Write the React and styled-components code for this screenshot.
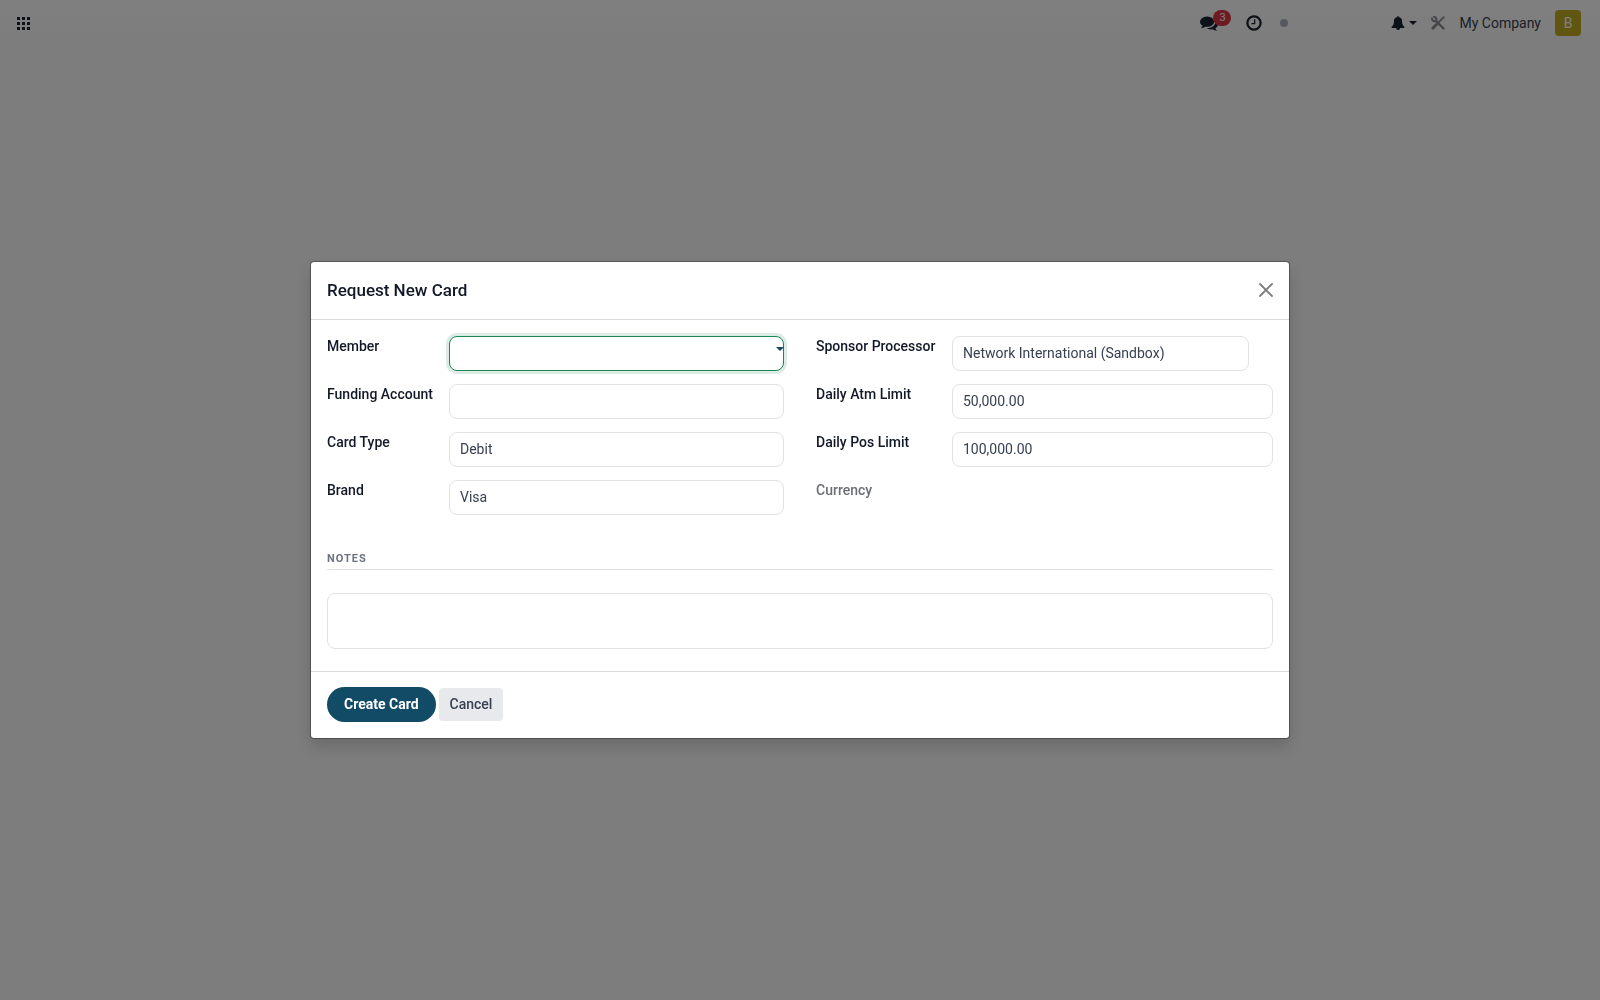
import React from "react";
import styled, { createGlobalStyle } from "styled-components";

const Global = createGlobalStyle`
  *, *::before, *::after { box-sizing: border-box; }
  html, body, #root { height: 100%; }
  body {
    margin: 0;
    background: #fafafa;
    color: #111827;
    font: 400 14px/21px Roboto, "Liberation Sans", sans-serif;
  }
  button, input, select, textarea { font: inherit; color: inherit; }
`;

const Page = styled.div`
  min-height: 100%;
`;

const Navbar = styled.header`
  display: flex;
  align-items: center;
  justify-content: space-between;
  height: 46px;
  padding: 0 19px 0 17px;
  background: linear-gradient(#ffffff, #fafafa);
`;

const IconButton = styled.button`
  position: relative;
  display: flex;
  align-items: center;
  gap: 4px;
  padding: 0;
  border: 0;
  background: none;
  color: ${(p) => p.$color || "#1b2330"};
`;

const Systray = styled.div`
  display: flex;
  align-items: center;
`;

const Group = styled.div`
  display: flex;
  align-items: center;
  gap: ${(p) => p.$gap}px;
  margin-right: ${(p) => p.$after || 0}px;
`;

const Badge = styled.span`
  position: absolute;
  top: -4px;
  left: 13px;
  width: 18px;
  border-radius: 8px;
  background: #dc3545;
  color: #ffffff;
  font-size: 11px;
  line-height: 16px;
  text-align: center;
`;

const Status = styled.span`
  width: 8px;
  height: 8px;
  border-radius: 50%;
  background: #adb5bd;
`;

const Caret = styled.span`
  border: 4px solid transparent;
  border-top-color: currentColor;
  border-bottom: 0;
`;

const Company = styled.button`
  padding: 0;
  border: 0;
  background: none;
  color: #374151;
`;

const Avatar = styled.button`
  width: 26px;
  height: 26px;
  padding: 0;
  border: 0;
  border-radius: 4px;
  background: #c0ad20;
  color: #ffffff;
`;

const Backdrop = styled.div`
  position: fixed;
  inset: 0;
  display: flex;
  align-items: center;
  justify-content: center;
  background: rgba(0, 0, 0, 0.5);
`;

const Dialog = styled.form`
  width: 100%;
  max-width: 980px;
  border: 1px solid rgba(0, 0, 0, 0.3);
  border-radius: 4px;
  background: #ffffff;
  background-clip: padding-box;
  box-shadow: 0 8px 16px rgba(0, 0, 0, 0.15);
`;

const Header = styled.div`
  display: flex;
  align-items: center;
  justify-content: space-between;
  padding: 16px 16px 17px;
  border-bottom: 1px solid #d8dadd;
`;

const Title = styled.h1`
  margin: 0;
  font-size: 17px;
  line-height: 24px;
  font-weight: 500;
`;

const Body = styled.div`
  padding: 16px 16px 22px;
`;

const Columns = styled.div`
  display: grid;
  grid-template-columns: 1fr 1fr;
  gap: 32px;
`;

const Fields = styled.div`
  display: grid;
  grid-template-columns: ${(p) => p.$label}px 1fr;
  grid-auto-rows: 35px;
  row-gap: 13px;
  column-gap: 16px;
`;

const Label = styled.label`
  font-weight: 500;
  white-space: nowrap;
  color: ${(p) => (p.$muted ? "#6b6e75" : "#111827")};
`;

const Control = styled.div`
  position: relative;
  display: flex;
  padding-right: ${(p) => p.$end || 0}px;
`;

const boxed = `
  width: 100%;
  border: 1px solid #e0e2e6;
  border-radius: 8px;
  background: #ffffff;
  color: #374151;
  outline: 0;
`;

const Input = styled.input`
  ${boxed}
  height: 35px;
  padding: 0 10px 2px;
  ${(p) =>
    p.$active &&
    "border-color: #198754; box-shadow: 0 0 0 3px rgba(25, 135, 84, 0.15);"}
`;

const Select = styled.select`
  ${boxed}
  height: 35px;
  padding: 0 10px;
  appearance: none;
`;

const FieldCaret = styled(Caret)`
  position: absolute;
  top: 11px;
  right: 0;
  color: #114b66;
`;

const Section = styled.h2`
  margin: 34px 0 23px;
  border-bottom: 1px solid #dee2e6;
  color: #6b7280;
  font-size: 11px;
  line-height: 20px;
  font-weight: 700;
  letter-spacing: 1px;
`;

const Notes = styled.textarea`
  ${boxed}
  display: block;
  height: 56px;
  padding: 6px 10px;
  resize: none;
`;

const Footer = styled.div`
  display: flex;
  align-items: center;
  gap: 3px;
  padding: 15px 16px 16px;
  border-top: 1px solid #d8dadd;
`;

const Button = styled.button`
  height: ${(p) => (p.$primary ? 35 : 33)}px;
  padding: 0 ${(p) => (p.$primary ? 17 : 11)}px;
  border: 0;
  border-radius: ${(p) => (p.$primary ? 18 : 4)}px;
  background: ${(p) => (p.$primary ? "#114b66" : "#e7e9ed")};
  color: ${(p) => (p.$primary ? "#ffffff" : "#374151")};
  font-weight: ${(p) => (p.$primary ? 700 : 500)};
`;

const AppsIcon = () => (
  <svg width="13" height="13" viewBox="0 0 13 13" fill="currentColor">
    {[0, 5, 10].map((y) =>
      [0, 5, 10].map((x) => (
        <rect key={`${x}-${y}`} x={x} y={y} width="3" height="3" />
      ))
    )}
  </svg>
);

const CommentsIcon = () => (
  <svg width="18" height="18" viewBox="0 0 1792 1792" fill="currentColor">
    <path d="M1408 768q0 139-94 257t-256.500 186.500-353.500 68.500q-86 0-176-16-124 88-278 128-36 9-86 16h-3q-11 0-20.500-8t-11.500-21q-1-3-1-6.500t.5-6.500 2-6l2.500-5 3.500-5.500 4-5 4.500-5 4-4.500q5-6 23-25t26-29.500 22.500-29 25-38.500 20.500-44q-124-72-195-177t-71-224q0-139 94-257t256.500-186.500 353.500-68.500 353.500 68.500 256.500 186.500 94 257zm384 256q0 120-71 224.500t-195 176.500q10 24 20.500 44t25 38.500 22.500 29 26 29.500 23 25q1 1 4 4.500t4.500 5 4 5 3.500 5.500l2.500 5 2 6 .5 6.500-1 6.500q-3 14-13 22t-22 7q-50-7-86-16-154-40-278-128-90 16-176 16-271 0-472-132 58 4 88 4 161 0 309-45t264-129q125-92 192-212t67-254q0-77-23-152 129 71 204 178t75 230z" />
  </svg>
);

const ClockIcon = () => (
  <svg width="16" height="18" viewBox="0 0 1536 1792" fill="currentColor">
    <path d="M896 544v448q0 14-9 23t-23 9h-320q-14 0-23-9t-9-23v-64q0-14 9-23t23-9h224v-352q0-14 9-23t23-9h64q14 0 23 9t9 23zm416 352q0-148-73-273t-198-198-273-73-273 73-198 198-73 273 73 273 198 198 273 73 273-73 198-198 73-273zm224 0q0 209-103 385.500t-279.500 279.500-385.500 103-385.500-103-279.500-279.500-103-385.500 103-385.500 279.500-279.500 385.500-103 385.500 103 279.500 279.500 103 385.500z" />
  </svg>
);

const BellIcon = () => (
  <svg width="14" height="14" viewBox="0 0 1792 1792" fill="currentColor">
    <path d="M912 1696q0-16-16-16-59 0-101.500-42.500t-42.500-101.500q0-16-16-16t-16 16q0 73 51.500 124.500t124.500 51.500q16 0 16-16zm816-288q0 52-38 90t-90 38h-448q0 106-75 181t-181 75-181-75-75-181h-448q-52 0-90-38t-38-90q50-42 91-88t85-119.500 74.500-158.500 50-206 19.500-260q0-152 117-282.500t307-158.500q-8-19-8-39 0-40 28-68t68-28 68 28 28 68q0 20-8 39 190 28 307 158.500t117 282.500q0 139 19.500 260t50 206 74.500 158.500 85 119.500 91 88z" />
  </svg>
);

const ToolsIcon = () => (
  <svg width="14" height="14" viewBox="0 0 14 14" fill="none" stroke="currentColor" strokeLinecap="round">
    <path d="M4.500 4.500L12.500 12.500" strokeWidth="2.400" />
    <path d="M1 2.400a2.600 2.600 0 0 0 4 2.400a2.600 2.600 0 0 0-2-4" strokeWidth="2" />
    <path d="M12.800 1.200L8 6" strokeWidth="1.800" />
    <path d="M5.500 8.500L1.800 12.200" strokeWidth="3" />
  </svg>
);

const CloseIcon = () => (
  <svg width="14" height="14" viewBox="0 0 14 14" fill="none" stroke="currentColor" strokeWidth="1.800" strokeLinecap="round">
    <path d="M1 1L13 13M13 1L1 13" />
  </svg>
);

export default function App() {
  return (
    <Page>
      <Global />
      <Navbar>
        <IconButton aria-label="Home menu">
          <AppsIcon />
        </IconButton>
        <Systray>
          <Group $gap={28} $after={103}>
            <IconButton aria-label="Messages">
              <CommentsIcon />
              <Badge>3</Badge>
            </IconButton>
            <Group $gap={18}>
              <IconButton aria-label="Activities">
                <ClockIcon />
              </IconButton>
              <Status />
            </Group>
          </Group>
          <Group $gap={14}>
            <IconButton aria-label="Notifications">
              <BellIcon />
              <Caret />
            </IconButton>
            <IconButton aria-label="Developer tools" $color="#8a8d93">
              <ToolsIcon />
            </IconButton>
            <Company>My Company</Company>
            <Avatar aria-label="User menu">B</Avatar>
          </Group>
        </Systray>
      </Navbar>
      <Backdrop>
        <Dialog role="dialog" aria-labelledby="dialog-title" onSubmit={(e) => e.preventDefault()}>
          <Header>
            <Title id="dialog-title">Request New Card</Title>
            <IconButton type="button" aria-label="Close" $color="#7c7c7c">
              <CloseIcon />
            </IconButton>
          </Header>
          <Body>
            <Columns>
              <Fields $label={106}>
                <Label htmlFor="member">Member</Label>
                <Control>
                  <Input id="member" $active />
                  <FieldCaret />
                </Control>
                <Label htmlFor="funding">Funding Account</Label>
                <Input id="funding" />
                <Label htmlFor="type">Card Type</Label>
                <Select id="type">
                  <option>Debit</option>
                </Select>
                <Label htmlFor="brand">Brand</Label>
                <Select id="brand">
                  <option>Visa</option>
                </Select>
              </Fields>
              <Fields $label={120}>
                <Label htmlFor="processor">Sponsor Processor</Label>
                <Control $end={24}>
                  <Input id="processor" defaultValue="Network International (Sandbox)" />
                </Control>
                <Label htmlFor="atm">Daily Atm Limit</Label>
                <Input id="atm" defaultValue="50,000.00" />
                <Label htmlFor="pos">Daily Pos Limit</Label>
                <Input id="pos" defaultValue="100,000.00" />
                <Label as="span" $muted>Currency</Label>
              </Fields>
            </Columns>
            <Section id="notes-title">NOTES</Section>
            <Notes aria-labelledby="notes-title" />
          </Body>
          <Footer>
            <Button type="submit" $primary>Create Card</Button>
            <Button type="button">Cancel</Button>
          </Footer>
        </Dialog>
      </Backdrop>
    </Page>
  );
}
